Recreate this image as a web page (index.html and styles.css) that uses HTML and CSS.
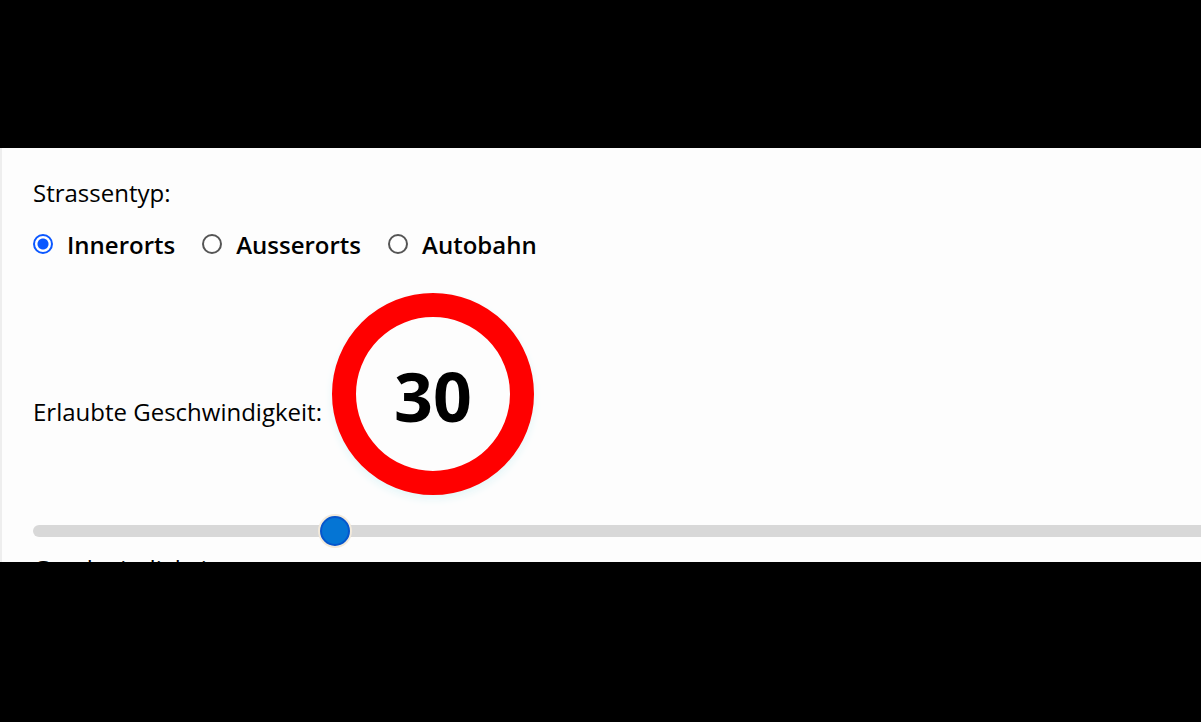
FILE: index.html
```
<!DOCTYPE html>
<html lang="de">
<head>
  <meta charset="UTF-8" />
  <meta name="viewport" content="width=device-width, initial-scale=1.0"/>
  <title>Geschwindigkeit</title>
  <link rel="stylesheet" href="styles.css">
</head>
<body>
<main class="panel">
  <form>
    <fieldset class="strassentyp">
      <legend>Strassentyp:</legend>
      <div class="optionen">
        <label><input type="radio" name="strassentyp" value="innerorts" checked>Innerorts</label>
        <label><input type="radio" name="strassentyp" value="ausserorts">Ausserorts</label>
        <label><input type="radio" name="strassentyp" value="autobahn">Autobahn</label>
      </div>
    </fieldset>

    <div class="erlaubt">
      <label for="tempo">Erlaubte Geschwindigkeit:</label>
      <output class="schild" for="tempo">30</output>
    </div>

    <input class="regler" type="range" id="tempo" min="0" max="121" value="30">
    <p class="gefahren">Geschwindigkeit</p>
  </form>
</main>
</body>
</html>
```

FILE: styles.css
```
* { box-sizing: border-box; }

body {
  display: grid;
  grid-template-rows: minmax(0, 1fr);
  height: 100vh;
  margin: 0;
  padding: 148px 0 160px;
  background: #000;
  color: #000;
  font-family: "Open Sans", sans-serif;
  font-size: 24px;
  line-height: 32px;
}

.panel {
  overflow: hidden;
  padding: 29px 0 0 31px;
  border-left: 2px solid #eee;
  background: #fdfdfd;
}

.strassentyp {
  margin: 0;
  padding: 0;
  border: 0;
}

.strassentyp legend { padding: 0; }

.optionen {
  display: flex;
  gap: 27px;
  margin-top: 20px;
}

.optionen label {
  display: flex;
  align-items: center;
  gap: 14px;
  font-weight: 600;
}

.optionen input {
  appearance: none;
  width: 20px;
  height: 20px;
  margin: 0 0 3px;
  border: 2px solid #555;
  border-radius: 50%;
  background: #fff;
}

.optionen input:checked {
  border-color: #0b57ff;
  background: radial-gradient(circle, #0b57ff 5px, #fff 6px);
}

.erlaubt {
  display: flex;
  align-items: center;
  gap: 10px;
  margin-top: 32px;
}

.erlaubt label { padding-top: 36px; }

/* Verkehrsschild */
.schild {
  display: flex;
  align-items: center;
  justify-content: center;
  width: 202px;
  height: 202px;
  padding-top: 4px;
  border: 24px solid #f00;
  border-radius: 50%;
  background: #fdfdfd;
  box-shadow: 0 4px 8px #e4f6f8;
  font-size: 68px;
  font-weight: 700;
}

.regler {
  appearance: none;
  display: block;
  width: calc(100% + 20px);
  height: 32px;
  margin: 20px 0 0;
  background: none;
}

.regler::-webkit-slider-runnable-track {
  height: 12px;
  border-radius: 6px;
  background: #d8d8d8;
}

.regler::-webkit-slider-thumb {
  appearance: none;
  width: 30px;
  height: 30px;
  margin-top: -9px;
  border: 2px solid #0656cc;
  border-radius: 50%;
  background: #0575d4;
  box-shadow: 0 0 0 2px #f3eadb;
}

.gefahren { margin: 6px 0 0; }
```
